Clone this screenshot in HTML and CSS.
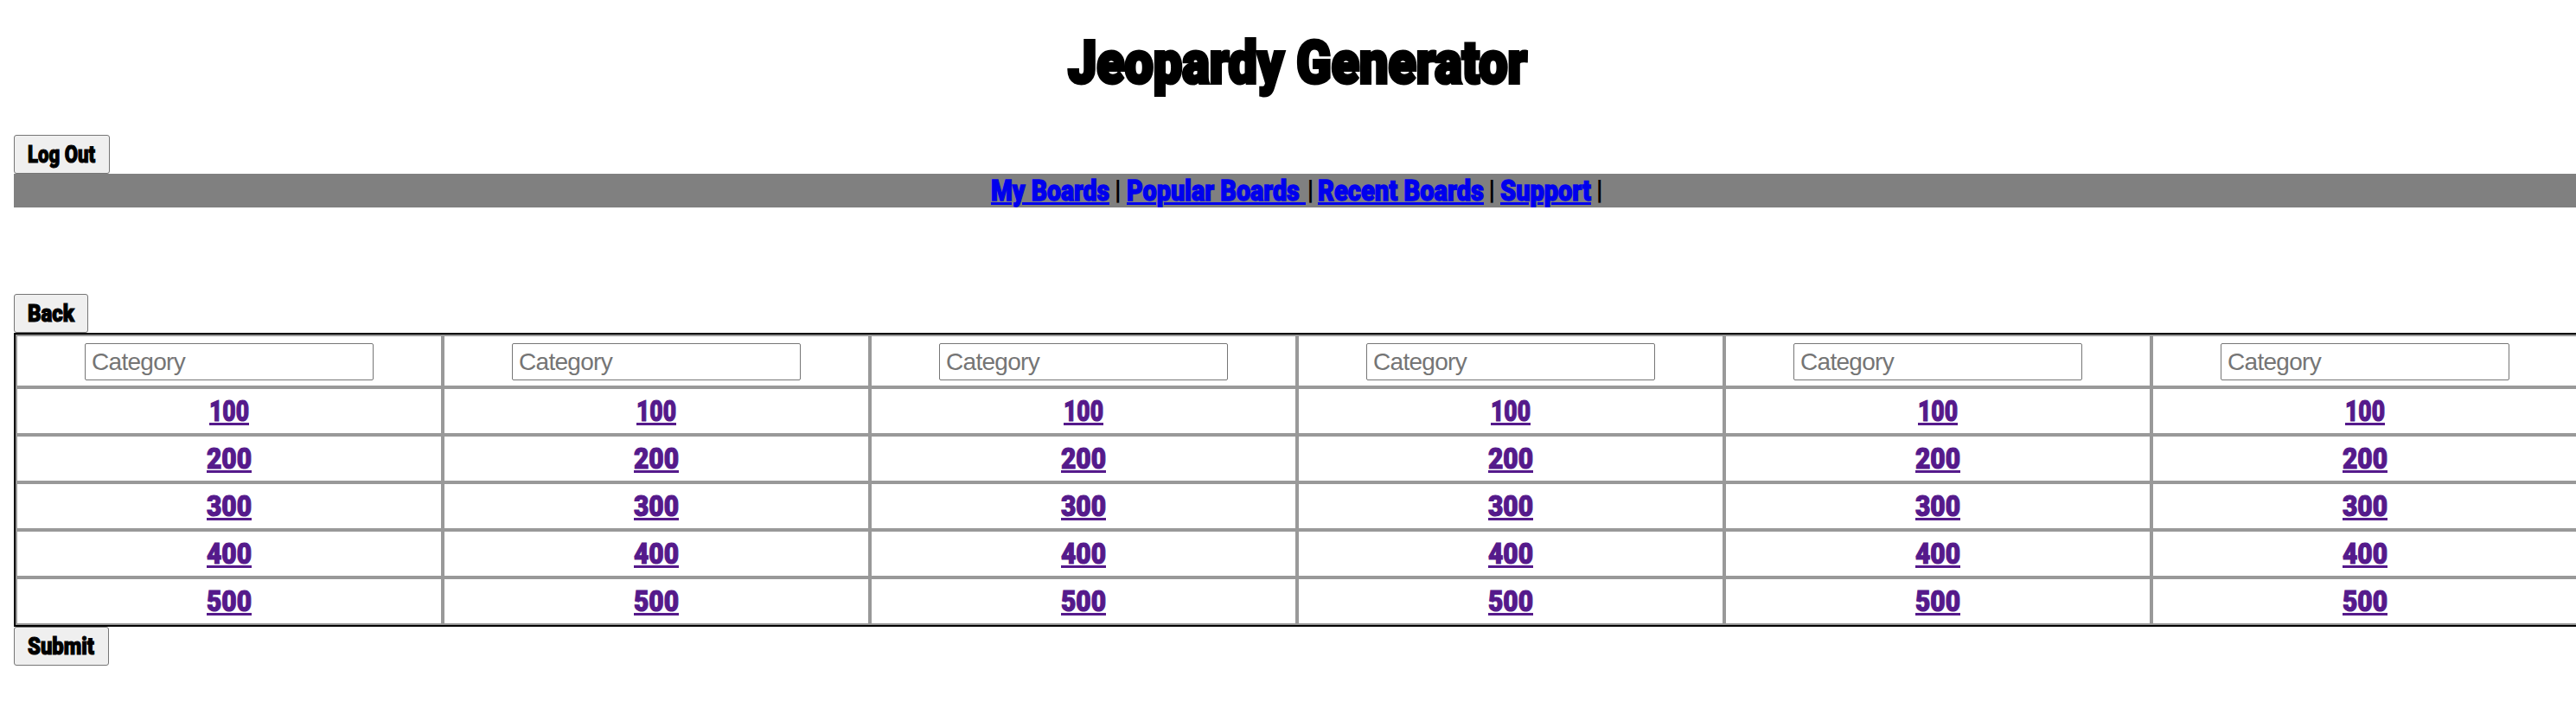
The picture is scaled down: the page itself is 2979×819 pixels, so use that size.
FILE: index.html
```html
<!DOCTYPE html>
<html lang="en">
<head>
<meta charset="utf-8">
<title>Jeopardy Generator</title>
<link rel="stylesheet" href="styles.css">
</head>
<body>
<h1 class="title"><span class="fit w-title">Jeopardy Generator</span></h1>
<button class="btn btn-logout"><span class="fit w-logout">Log Out</span></button>
<nav class="nav">
<a class="fit w-my" href="#my">My Boards</a><span class="bar">|</span><a class="fit w-popular" href="#popular">Popular Boards&nbsp;</a><span class="bar bar-tight">|</span><a class="fit w-recent" href="#recent">Recent Boards</a><span class="bar">|</span><a class="fit w-support" href="#support">Support</a><span class="bar">|</span>
</nav>
<button class="btn btn-back"><span class="fit w-back">Back</span></button>
<table class="board"><tbody id="board"></tbody></table>
<button class="btn btn-submit"><span class="fit w-submit">Submit</span></button>
<script src="board.js"></script>
</body>
</html>
```
FILE: styles.css
```css
html { overflow: hidden; background: #fff; }
body { margin: 0 0 0 16px; width: 2968px; color: #000; font-family: Roboto, "Liberation Sans", sans-serif; font-weight: 900; display: flex; flex-direction: column; align-items: flex-start; }
.fit { display: inline-block; white-space: nowrap; transform-origin: 0 50%; text-align: left; }
.title { margin: 0; padding-top: 28px; height: 128px; width: 100%; box-sizing: content-box; text-align: center; font-size: 69px; line-height: 89px; font-weight: 900; -webkit-text-stroke: 4px #000; }
.btn { box-sizing: border-box; height: 45px; border: 1px solid #767676; border-radius: 3px; background: #efefef; color: #000; padding: 0 0 0 15px; text-align: left; font: 900 28.5px/43px Roboto, "Liberation Sans", sans-serif; -webkit-text-stroke: 1.2px #000; }
.btn-logout { width: 111px; }
.btn-back { width: 86px; margin-top: 100px; }
.btn-submit { width: 110px; }
.nav { display: flex; justify-content: flex-start; box-sizing: border-box; padding-left: 1130px; width: 100%; height: 39px; background: #808080; font-size: 34px; line-height: 39px; }
.nav a { color: #00e; -webkit-text-stroke: 1.4px #00e; }
.nav a, .board a { text-decoration: underline; text-decoration-thickness: 3px; text-underline-offset: 2px; }
.bar { width: 19.5px; text-align: center; font-size: 31px; font-weight: 900; line-height: 38px; }
.bar-tight { width: 14px; text-indent: -2px; }
.board { table-layout: fixed; width: 2968px; border: 2px solid #000; border-spacing: 0; }
.board td { box-sizing: border-box; height: 55px; padding: 0; border: 2px solid #999; text-align: center; vertical-align: middle; font-size: 34px; line-height: 51px; }
.board .category { height: 61px; padding-top: 8px; vertical-align: top; line-height: 0; }
.board input { box-sizing: border-box; width: 334px; height: 43px; margin: 0; padding: 0 7px; border: 1px solid #767676; border-radius: 2px; background: #fff; font: 28px "Liberation Sans", sans-serif; letter-spacing: -0.7px; }
.board input::placeholder { color: #757575; }
.board a { color: #551a8b; -webkit-text-stroke: 1.2px #551a8b; vertical-align: top; }
.w-title { width: 531px; }
.w-logout { width: 78px; }
.w-back { width: 54px; }
.w-submit { width: 77px; }
.w-my { width: 137px; }
.w-popular { width: 207px; }
.w-recent { width: 192px; }
.w-support { width: 105px; }
.w-100 { width: 46px; }
.w-num { width: 52px; }
```
FILE: board.js
```js
const board = document.getElementById("board");
const columns = 6;
const cells = (html, cls) => `<tr>${`<td class="${cls}">${html}</td>`.repeat(columns)}</tr>`;
let rows = cells('<input type="text" placeholder="Category">', "category");
for (const value of [100, 200, 300, 400, 500]) {
  rows += cells(`<a class="fit ${value === 100 ? "w-100" : "w-num"}" href="#${value}">${value}</a>`, "value");
}
board.innerHTML = rows;

// Condense each label to the width of its box.
for (const label of document.querySelectorAll(".fit")) {
  const range = document.createRange();
  range.selectNodeContents(label);
  const natural = range.getBoundingClientRect().width;
  label.style.transform = `scaleX(${label.offsetWidth / natural})`;
}
```
